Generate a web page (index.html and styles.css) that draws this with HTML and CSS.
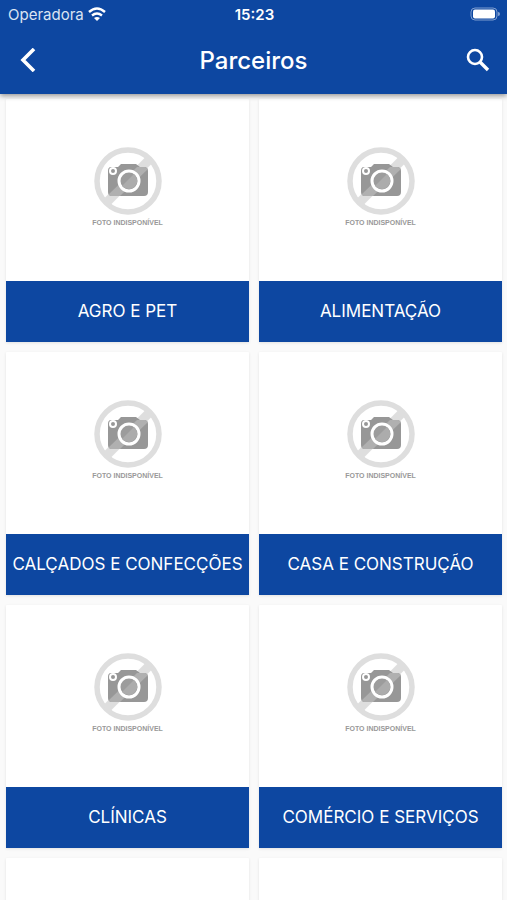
FILE: index.html
```html
<!DOCTYPE html>
<html lang="pt-BR">
<head>
    <meta charset="UTF-8">
    <meta name="viewport" content="width=device-width, initial-scale=1.0">
    <title>Parceiros</title>
    <link rel="stylesheet" href="styles.css">
</head>
<body>
    <svg class="sprite" aria-hidden="true">
        <symbol id="no-photo" viewBox="0 0 68 68">
            <circle cx="34" cy="34" r="31" fill="none" stroke="#dedede" stroke-width="5.5"/>
            <path d="M12 56 56 12" stroke="#dedede" stroke-width="9"/>
            <path d="M17 20h7l3-3h15l4 3h4q4 0 4 4v21q0 4-4 4H18q-4 0-4-4V24q0-4 3-4z" fill="#979797"/>
            <path d="M15 47 43 20h8l3 2-28 27H18q-3 0-3-2z" fill="#b0b0b0"/>
            <circle cx="19" cy="24" r="3" fill="#979797" stroke="#fff" stroke-width="2"/>
            <circle cx="35" cy="34" r="10" fill="#9c9c9c" stroke="#fff" stroke-width="3"/>
            <path d="M28 39 40 27q4 4 3 9-3 6-8 6-4 0-7-3z" fill="#acacac"/>
        </symbol>
    </svg>

    <div class="app">
        <header class="header">
            <div class="status-bar">
                <div class="carrier">
                    <span>Operadora</span>
                    <svg width="18" height="14" viewBox="0 0 18 14" fill="none" stroke="#fff" stroke-width="2.4">
                        <path d="M1 5q8-7 16 0M4 8.5q5-4 10 0"/>
                        <path d="M9 14 6 11q3-2 6 0z" fill="#fff" stroke="none"/>
                    </svg>
                </div>
                <time class="clock">15:23</time>
                <svg class="battery" width="31" height="14" viewBox="0 0 31 14">
                    <rect x="1" y="1" width="26" height="12" rx="4" fill="none" stroke="#7f9ed0"/>
                    <rect x="3" y="2.5" width="22" height="9" rx="2" fill="#fff"/>
                    <path d="M28 5q2 0 2 2t-2 2z" fill="#7f9ed0"/>
                </svg>
            </div>
            <div class="nav-bar">
                <button class="icon-btn" type="button" aria-label="Voltar">
                    <svg width="24" height="24" viewBox="0 0 24 24" fill="none" stroke="#fff" stroke-width="3.6">
                        <path d="M17 1 6 12l11 11"/>
                    </svg>
                </button>
                <h1>Parceiros</h1>
                <button class="icon-btn" type="button" aria-label="Buscar">
                    <svg width="24" height="24" viewBox="0 0 24 24" fill="none" stroke="#fff">
                        <circle cx="9" cy="9" r="7" stroke-width="2.6"/>
                        <path d="m14 14 8 8" stroke-width="3.4"/>
                    </svg>
                </button>
            </div>
        </header>

        <main class="grid">
            <a class="card" href="#">
                <div class="photo"><svg class="no-photo"><use href="#no-photo"/></svg><small>FOTO INDISPONÍVEL</small></div>
                <div class="label">AGRO E PET</div>
            </a>
            <a class="card" href="#">
                <div class="photo"><svg class="no-photo"><use href="#no-photo"/></svg><small>FOTO INDISPONÍVEL</small></div>
                <div class="label">ALIMENTAÇÃO</div>
            </a>
            <a class="card" href="#">
                <div class="photo"><svg class="no-photo"><use href="#no-photo"/></svg><small>FOTO INDISPONÍVEL</small></div>
                <div class="label">CALÇADOS E CONFECÇÕES</div>
            </a>
            <a class="card" href="#">
                <div class="photo"><svg class="no-photo"><use href="#no-photo"/></svg><small>FOTO INDISPONÍVEL</small></div>
                <div class="label">CASA E CONSTRUÇÃO</div>
            </a>
            <a class="card" href="#">
                <div class="photo"><svg class="no-photo"><use href="#no-photo"/></svg><small>FOTO INDISPONÍVEL</small></div>
                <div class="label">CLÍNICAS</div>
            </a>
            <a class="card" href="#">
                <div class="photo"><svg class="no-photo"><use href="#no-photo"/></svg><small>FOTO INDISPONÍVEL</small></div>
                <div class="label">COMÉRCIO E SERVIÇOS</div>
            </a>
            <div class="card"></div>
            <div class="card"></div>
        </main>
    </div>
</body>
</html>
```

FILE: styles.css
```css
* {
    margin: 0;
    padding: 0;
    box-sizing: border-box;
}

body {
    font-family: Inter, "Liberation Sans", sans-serif;
    background-color: #fafafa;
}

.sprite {
    position: absolute;
    width: 0;
    height: 0;
}

.app {
    display: flex;
    flex-direction: column;
    height: 100vh;
}

.header {
    position: relative;
    z-index: 1;
    flex: none;
    background-color: #0d47a1;
    color: white;
    box-shadow: 0 2px 5px rgba(0,0,0,0.4);
}

.status-bar {
    display: grid;
    grid-template-columns: 1fr auto 1fr;
    align-items: center;
    height: 28px;
    padding: 0 6px 0 8px;
    font-size: 15px;
}

.carrier {
    display: flex;
    align-items: center;
    gap: 4px;
    color: #dbe4f2;
}

.clock {
    font-weight: 600;
}

.battery {
    justify-self: end;
}

.nav-bar {
    display: flex;
    align-items: center;
    justify-content: space-between;
    height: 66px;
    padding: 0 14px 2px;
}

h1 {
    font-size: 24px;
    font-weight: 500;
}

.icon-btn {
    display: flex;
    align-items: center;
    justify-content: center;
    width: 30px;
    height: 48px;
    border: none;
    background: none;
    cursor: pointer;
}

.grid {
    flex: 1;
    min-height: 0;
    display: grid;
    grid-template-columns: 1fr 1fr;
    align-content: start;
    gap: 10px;
    padding: 5px 5px 5px 6px;
    overflow-y: auto;
    scrollbar-width: none;
}

.card {
    display: flex;
    flex-direction: column;
    aspect-ratio: 1;
    background-color: white;
    border-radius: 1px;
    box-shadow: 0 1px 3px rgba(0,0,0,0.1);
    color: white;
    text-decoration: none;
}

.photo {
    flex: 1;
    display: flex;
    flex-direction: column;
    align-items: center;
    justify-content: center;
    gap: 4px;
    padding-bottom: 6px;
}

.no-photo {
    width: 68px;
    height: 68px;
}

small {
    font-family: "Liberation Sans", Arial, sans-serif;
    font-size: 7px;
    font-weight: bold;
    line-height: 8px;
    color: #999;
}

.label {
    display: flex;
    align-items: center;
    justify-content: center;
    height: 61px;
    padding-bottom: 2px;
    background-color: #0d47a1;
    font-size: 17px;
    white-space: nowrap;
}
```
